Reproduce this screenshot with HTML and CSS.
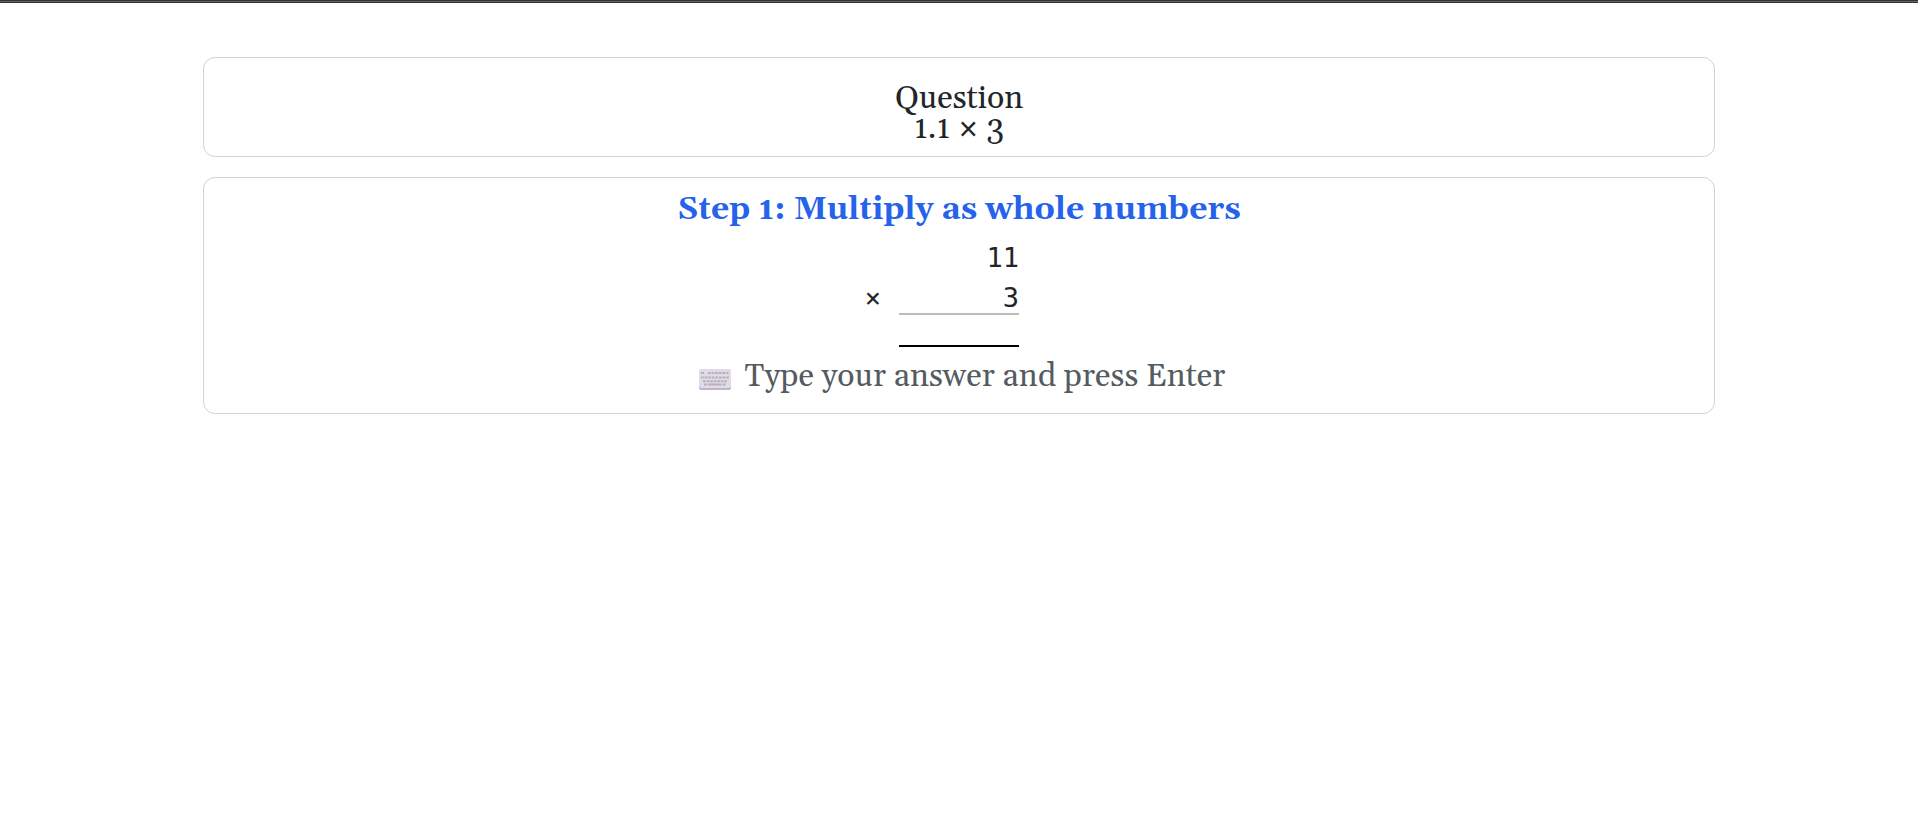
FILE: index.html
```html
<!DOCTYPE html>
<html lang="en">
<head>
    <meta charset="UTF-8">
    <meta name="viewport" content="width=device-width, initial-scale=1.0">
    <title>Decimal Multiplication</title>
    <link rel="stylesheet" href="styles.css">
</head>
<body>
    <div class="top-bar"></div>
    <main class="container">
        <section class="card question">
            Question<br>
            1.1 × 3
        </section>

        <section class="card step">
            <h2>Step 1: Multiply as whole numbers</h2>
            <div class="work">
                <span class="number">11</span>
                <span class="operator">×</span>
                <span class="number multiplier">3</span>
                <input class="answer" id="answer" type="text" inputmode="numeric" autocomplete="off">
            </div>
            <div class="hint">
                <svg class="keyboard" viewBox="0 0 32 21" aria-hidden="true">
                    <rect x="0" y="1" width="32" height="20" rx="2" fill="#bfb5cf"/>
                    <rect x="0" y="0" width="32" height="19" rx="2" fill="#e0dbe6"/>
                    <g stroke="#b5b1b9" stroke-width="2">
                        <path d="M2 4h3"/>
                        <path d="M9 4h20.500" stroke-dasharray="2.700 .860"/>
                        <path d="M2 8.500h28" stroke-dasharray="2.700 .900"/>
                        <path d="M4 12.300h24" stroke-dasharray="2.700 .850"/>
                        <path d="M5 15.500h3M9 15.500h13.500M23.500 15.500h3"/>
                    </g>
                </svg>
                <label for="answer">Type your answer and press Enter</label>
            </div>
        </section>
    </main>
</body>
</html>
```
FILE: styles.css
```css
* {
    box-sizing: border-box;
}
body {
    margin: 0;
    background-color: #fff;
    color: #212529;
    font-family: Gelasio, Georgia, "Liberation Serif", serif;
    font-size: 32px;
    line-height: 32px;
}
.top-bar {
    height: 3px;
    background-color: #666;
    border-top: 1px solid #333;
    border-bottom: 1px solid #333;
}
.container {
    display: flex;
    flex-direction: column;
    gap: 20px;
    max-width: 1560px;
    margin: 0 auto;
    padding: 54px 24px;
}
.card {
    border: 1px solid #d1d3db;
    border-radius: 12px;
    text-align: center;
}
.question {
    padding: 26px 16px 12px;
    line-height: 30px;
}
.step {
    padding: 16px 16px 20px;
}
.step h2 {
    margin: 0 0 17px;
    color: #2563eb;
    font-size: 32px;
    font-weight: bold;
}
/* operator column on the left, digits right-aligned */
.work {
    display: grid;
    grid-template-columns: 28px 120px 28px;
    column-gap: 12px;
    justify-content: center;
    font-family: Consolas, "DejaVu Sans Mono", monospace;
    font-size: 27px;
    line-height: 30px;
}
.number {
    grid-column: 2;
    margin-bottom: 10px;
    text-align: right;
}
.operator {
    grid-column: 1;
}
.multiplier {
    margin-bottom: 0;
    border-bottom: 2px solid #bbb;
}
.answer {
    grid-column: 2;
    width: 100%;
    height: 32px;
    padding: 0;
    border: none;
    border-bottom: 2px solid #000;
    background: transparent;
    font: inherit;
    text-align: right;
    outline: none;
}
.hint {
    display: flex;
    justify-content: center;
    align-items: center;
    gap: 14px;
    margin-top: 14px;
    padding-left: 6px;
    color: #555b60;
}
.keyboard {
    width: 32px;
    height: 21px;
    margin-top: 4px;
}
```
